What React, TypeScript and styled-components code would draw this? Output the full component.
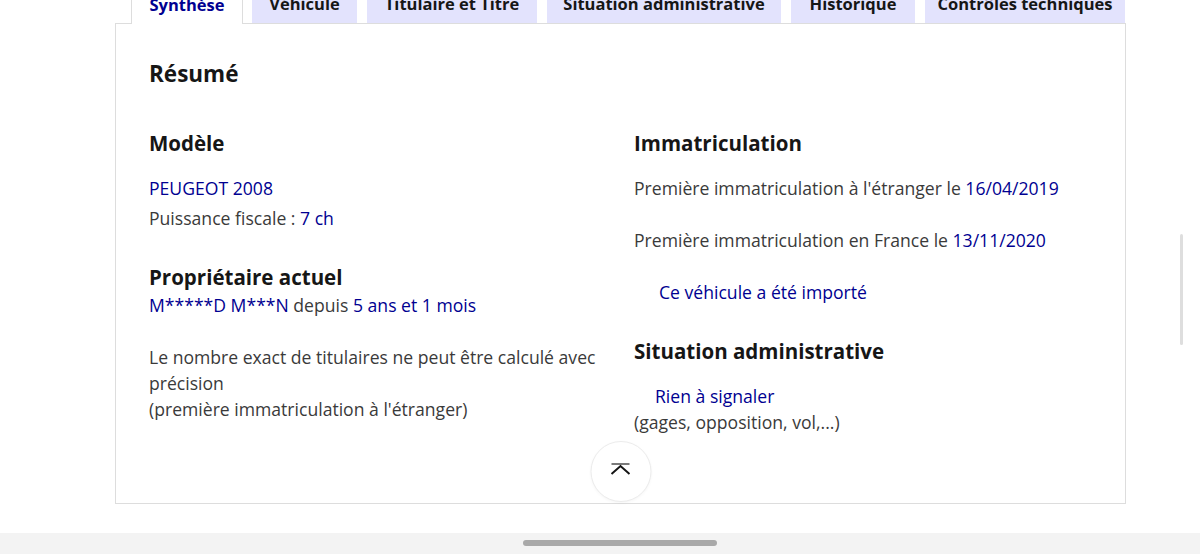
import React from "react";
import styled, { createGlobalStyle } from "styled-components";

const GlobalStyle = createGlobalStyle`
	html, body {
		margin: 0;
		padding: 0;
		background: #ffffff;
		overflow: hidden;
	}
	body {
		font-family: "Open Sans", "Noto Sans", Arial, sans-serif;
		color: #3a3a3a;
	}
	* {
		box-sizing: border-box;
	}
`;

// tab widths read off the reference
const tabs = [
	{ label: "Synthèse", width: 112 },
	{ label: "Véhicule", width: 105 },
	{ label: "Titulaire et Titre", width: 170 },
	{ label: "Situation administrative", width: 234 },
	{ label: "Historique", width: 124 },
	{ label: "Contrôles techniques", width: 200 },
];

export default function App() {
	return (
		<>
			<GlobalStyle />
			<Page>
				<Content>
					<TabList>
						{tabs.map((tab, i) => (
							<Tab key={tab.label} active={i === 0} w={tab.width}>
								{tab.label}
							</Tab>
						))}
					</TabList>
					<Panel>
						<Title>Résumé</Title>
						<Columns>
							<Column>
								<Heading>Modèle</Heading>
								<Line mt={18}>
									<Value>PEUGEOT 2008</Value>
								</Line>
								<Line mt={4}>
									Puissance fiscale : <Value>7 ch</Value>
								</Line>
								<Heading mt={32}>Propriétaire actuel</Heading>
								<Line mt={1}>
									<Value>M*****D M***N</Value> depuis{" "}
									<Value>5 ans et 1 mois</Value>
								</Line>
								<Line mt={26}>
									Le nombre exact de titulaires ne peut être calculé avec
									précision
									<br />
									(première immatriculation à l'étranger)
								</Line>
							</Column>
							<Column>
								<Heading>Immatriculation</Heading>
								<Line mt={18}>
									Première immatriculation à l'étranger le{" "}
									<Value>16/04/2019</Value>
								</Line>
								<Line mt={26}>
									Première immatriculation en France le{" "}
									<Value>13/11/2020</Value>
								</Line>
								<Line mt={26} indent={25}>
									<Value>Ce véhicule a été importé</Value>
								</Line>
								<Heading mt={32}>Situation administrative</Heading>
								<Line mt={18} indent={21}>
									<Value>Rien à signaler</Value>
								</Line>
								<Line>(gages, opposition, vol,...)</Line>
							</Column>
						</Columns>
						<ScrollTop aria-label='Haut de page'>
							<svg width='24' height='24' viewBox='0 0 24 24' fill='none'>
								<line x1='3' y1='3' x2='21' y2='3' stroke='#7a7a7a' strokeWidth='2' />
								<polyline
									points='3,13 12,5 21,13'
									stroke='#161616'
									strokeWidth='2'
									strokeLinejoin='miter'
								/>
							</svg>
						</ScrollTop>
					</Panel>
				</Content>
				<HomeBar>
					<HomeIndicator />
				</HomeBar>
				<ScrollThumb />
			</Page>
		</>
	);
}

const Page = styled.div`
	position: relative;
	height: 554px;
	display: flex;
	flex-direction: column;
`;

const Content = styled.div`
	margin: -17px 74px 0 115px;
	display: flex;
	flex-direction: column;
`;

const TabList = styled.div`
	display: flex;
	gap: 10px;
	padding-left: 16px;
	height: 41px;
	position: relative;
	z-index: 1;
`;

const Tab = styled.div<{ active?: boolean; w: number }>`
	flex: none;
	width: ${(p) => p.w}px;
	height: ${(p) => (p.active ? "41px" : "40px")};
	display: flex;
	align-items: center;
	justify-content: center;
	font-size: 16.5px;
	font-weight: 700;
	white-space: nowrap;
	color: ${(p) => (p.active ? "#000091" : "#161616")};
	background: ${(p) => (p.active ? "#ffffff" : "#e3e3fd")};
	border: ${(p) => (p.active ? "1px solid #dddddd" : "none")};
	border-bottom: none;
	margin-right: ${(p) => (p.active ? "-1px" : "0")};
`;

const Panel = styled.div`
	position: relative;
	height: 481px;
	margin-top: -1px;
	border: 1px solid #dddddd;
	padding: 36px 33px 0;
`;

const Title = styled.h2`
	margin: 0;
	font-size: 22.5px;
	line-height: 28px;
	font-weight: 700;
	color: #161616;
`;

const Columns = styled.div`
	display: grid;
	grid-template-columns: 1fr 1fr;
	column-gap: 27px;
	margin-top: 41px;
`;

const Column = styled.div`
	display: flex;
	flex-direction: column;
`;

const Heading = styled.h3<{ mt?: number }>`
	margin: ${(p) => p.mt ?? 0}px 0 0;
	font-size: 20.5px;
	line-height: 28px;
	font-weight: 700;
	color: #161616;
`;

const Line = styled.p<{ mt?: number; indent?: number }>`
	margin: ${(p) => p.mt ?? 0}px 0 0;
	padding-left: ${(p) => p.indent ?? 0}px;
	font-size: 17.6px;
	line-height: 26px;
	color: #3a3a3a;
`;

const Value = styled.span`
	color: #000091;
`;

const ScrollTop = styled.button`
	position: absolute;
	left: 50%;
	bottom: 1px;
	transform: translateX(-50%);
	width: 61px;
	height: 61px;
	border-radius: 50%;
	border: 1px solid #ececec;
	background: #ffffff;
	display: flex;
	align-items: center;
	justify-content: center;
	padding: 0;
	padding-top: 3px;
	box-shadow: 0 1px 3px rgba(0, 0, 0, 0.04);
`;

const HomeBar = styled.div`
	margin-top: auto;
	height: 21px;
	background: #f3f3f3;
	display: flex;
	justify-content: center;
	padding-top: 7px;
`;

const HomeIndicator = styled.div`
	width: 194px;
	height: 6px;
	border-radius: 3px;
	background: #a9a9a9;
	margin-left: 40px;
`;

const ScrollThumb = styled.div`
	position: absolute;
	right: 17px;
	top: 234px;
	width: 3px;
	height: 111px;
	border-radius: 2px;
	background: #dedede;
`;
